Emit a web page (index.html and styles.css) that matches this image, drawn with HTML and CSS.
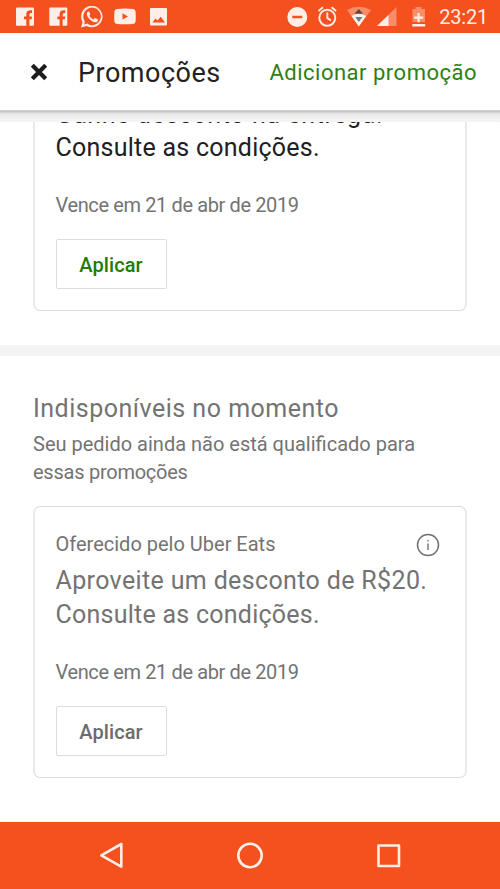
FILE: index.html
```html
<!DOCTYPE html>
<html lang="pt-BR">
<head>
<meta charset="utf-8">
<title>Promoções</title>
<link rel="stylesheet" href="styles.css">
</head>
<body>
<div class="screen">
  <div class="status">
    <svg width="500" height="33" viewBox="0 0 500 33">
      <g fill="#fdeee8">
        <path id="fb" fill-rule="evenodd" d="M17 7.500H33a1 1 0 0 1 1 1V24.800a1 1 0 0 1-1 1H17a1 1 0 0 1-1-1V8.500a1 1 0 0 1 1-1ZM26.300 25.800H29.400V19.300H31.600L32 16.500H29.400V14.500q0-1.500 1.500-1.500H32V10.200H30.300q-4 0-4 3.900V16.500H24V19.300H26.300Z"/>
        <use href="#fb" x="33.300"/>
        <path d="M81 27.500l1.500-5.600a10.700 10.700 0 1 1 4.200 4.100Zm3.200-3.100 2.800-.8a8.800 8.800 0 1 0-2.100-2.100Z" fill-rule="evenodd"/>
        <path d="M88.200 11.600c-.9.500-1.400 1.500-1.300 2.600.4 3.800 4.800 7.700 8.500 8 1.400 0 2.500-.9 2.500-2.300 0-.5-.1-.6-.5-.8l-2-.9c-.4-.2-.7-.1-1 .3l-.8.900c-1.900-.7-3.300-1.900-4.200-3.700l.7-1c.2-.3.200-.5 0-.9l-.8-1.900c-.3-.6-.6-.5-1.100-.3Z"/>
        <path fill-rule="evenodd" d="M117 9q8-.8 16 0 2.500.2 2.600 2.600.4 5 0 10-.1 2.200-2.600 2.400-8 .6-16 0-2.500-.2-2.600-2.400-.4-5 0-10Q114.500 9.200 117 9Zm5.500 4.300V19.500L128 16.400Z"/>
        <path fill-rule="evenodd" d="M151 8H166a1 1 0 0 1 1 1V24.500a1 1 0 0 1-1 1H151a1 1 0 0 1-1-1V9a1 1 0 0 1 1-1Zm1.500 14.500H165L160.700 16.700 157.600 20.600 155.400 18.500Z"/>
        <path fill-rule="evenodd" d="M297.300 7a10 10 0 1 1 0 20 10 10 0 0 1 0-20Zm-5 8.800v2.400h10v-2.400Z"/>
      </g>
      <g fill="none" stroke="#fdeee8" stroke-width="1.900">
        <circle cx="327.300" cy="17.800" r="8"/>
        <path d="M327.300 12.500V18l3.500 2.400M318.500 11l4.500-3.700M336.100 11l-4.500-3.700"/>
      </g>
      <path d="M347 10q11.700-6.400 24 0L358.800 26.500Z" fill="#fa8c67"/>
      <path d="M351.500 16q7.300-5 14.700 0L358.800 26.500Z" fill="#fdeee8"/>
      <path d="M354.500 13.700h8.500L358.800 9Z" fill="#58474a"/>
      <path d="M355.300 17h7L358.800 22Z" fill="#607e8c"/>
      <path d="M396.500 7V26H377Z" fill="#fa8c67"/>
      <path d="M388.500 15V26H377Z" fill="#fdeee8"/>
      <path d="M412.500 9h3V7h6v2h3.500v13h-12.500Z" fill="#fa8c67"/>
      <path d="M412.300 24h12.900v2.600h-12.900ZM417.500 13h2.200v3.500h3.500v2.200h-3.500v3.500h-2.200v-3.500H414v-2.200h3.500Z" fill="#fdeee8"/>
    </svg>
    <span class="clock">23:21</span>
  </div>
  <header class="bar">
    <svg class="close" width="18" height="18" viewBox="0 0 18 18"><path d="M2.300 2.300 15.700 15.700M15.700 2.300 2.300 15.700" stroke="#1c1c1e" stroke-width="4.200"/></svg>
    <h1 class="title">Promoções</h1>
    <span class="add">Adicionar promoção</span>
  </header>
  <div class="shade"></div>
  <main class="content">
    <section class="group first">
      <article class="card cut">
        <p class="offer dark"><span class="lead">Ganhe desconto na entrega.</span><br><span class="terms">Consulte as condições.</span></p>
        <p class="due">Vence em 21 de abr de 2019</p>
        <button class="apply green">Aplicar</button>
      </article>
    </section>
    <section class="group second">
      <h2 class="heading">Indisponíveis no momento</h2>
      <p class="note">Seu pedido ainda não está qualificado para<br><span class="note-end">essas promoções</span></p>
      <article class="card">
        <div class="by"><span>Oferecido pelo Uber Eats</span>
          <svg width="24" height="24" viewBox="0 0 24 24"><circle cx="12" cy="12" r="10.500" fill="none" stroke="#737373" stroke-width="1.500"/><path d="M12 10.500V17M12 7V8.500" stroke="#737373" stroke-width="1.400"/></svg>
        </div>
        <p class="offer">Aproveite um desconto de R$20.<br><span class="terms">Consulte as condições.</span></p>
        <p class="due">Vence em 21 de abr de 2019</p>
        <button class="apply">Aplicar</button>
      </article>
    </section>
  </main>
  <nav class="nav">
    <svg width="500" height="67" viewBox="0 0 500 67" fill="none" stroke="#fdeee8" stroke-width="2.600" stroke-linejoin="round"><path d="M101.300 33.300 121.300 22V44.600Z"/><circle cx="250" cy="33.500" r="11.700"/><path d="M378.500 23.500h20.500v20.500h-20.500Z"/></svg>
  </nav>
</div>
</body>
</html>
```
FILE: styles.css
```css
* { box-sizing: border-box; }
body { margin: 0; font-family: Roboto, sans-serif; color: #737373; background: #fff; }
h1, h2, p { margin: 0; font-weight: 400; }
.screen { width: 500px; height: 889px; display: flex; flex-direction: column; overflow: hidden; }
.status { height: 33px; background: #f5511e; position: relative; flex: none; }
.status svg, .nav svg { display: block; }
.clock { position: absolute; right: 12px; top: 5px; font-size: 20px; line-height: 24px; letter-spacing: -.2px; color: #fdeee8; }
.bar { height: 78px; flex: none; display: flex; align-items: center; padding: 1px 23px 0 30px; background: #fff; border-bottom: 1px solid #d0d0d0; position: relative; z-index: 2; }
.title { font-size: 27px; letter-spacing: .5px; color: #222; margin-left: 30px; padding-top: 1px; white-space: nowrap; }
.add { margin-left: auto; font-size: 22px; letter-spacing: .5px; color: #2c8113; white-space: nowrap; }
.shade { height: 11px; flex: none; background: linear-gradient(#c0c0c0, #e6e6e6 25%, #f1f1f1 60%, #f5f5f5); position: relative; z-index: 1; }
.content { height: 700px; flex: none; }
.group { padding: 0 33px; }
.first { height: 234px; border-bottom: 11px solid #f4f4f4; }
.second { padding-top: 35px; }
.card { display: flow-root; border: 1px solid #e2e2e2; border-width: 1px 2px; border-color: #dedede #e9e9e9; border-radius: 7px; padding: 19px 20.5px; width: 434px; height: 272px; }
.cut { border-top: 0; border-radius: 0 0 7px 7px; height: 189px; padding-top: 0; }
.offer { font-size: 25px; line-height: 34px; letter-spacing: .36px; white-space: nowrap; }
.terms { letter-spacing: .25px; }
.lead { letter-spacing: .6px; line-height: 20px; vertical-align: -1px; }
.dark { color: #202022; }
.cut .offer { margin-top: -25px; }
.due { font-size: 20px; line-height: 26px; margin-top: 27px; letter-spacing: -.38px; white-space: nowrap; }
.apply { display: block; margin: 21px 0 0; padding: 2px 0 0; width: 111px; height: 50px; border: 1px solid #dcdcdc; border-radius: 2px; background: #fff; font: 500 20px Roboto, sans-serif; letter-spacing: .1px; color: #6b6b6b; }
.green { color: #227b08; }
.heading { font-size: 25px; line-height: 36px; letter-spacing: .5px; white-space: nowrap; }
.note { font-size: 20px; line-height: 28px; margin: 3px 0 20px; white-space: nowrap; }
.note-end { letter-spacing: -.25px; }
.by { display: flex; justify-content: space-between; height: 38px; padding-right: 4.5px; font-size: 20px; line-height: 36px; }
.by svg { margin-top: 6.5px; }
.nav { height: 67px; background: #f5511e; flex: none; }
```
